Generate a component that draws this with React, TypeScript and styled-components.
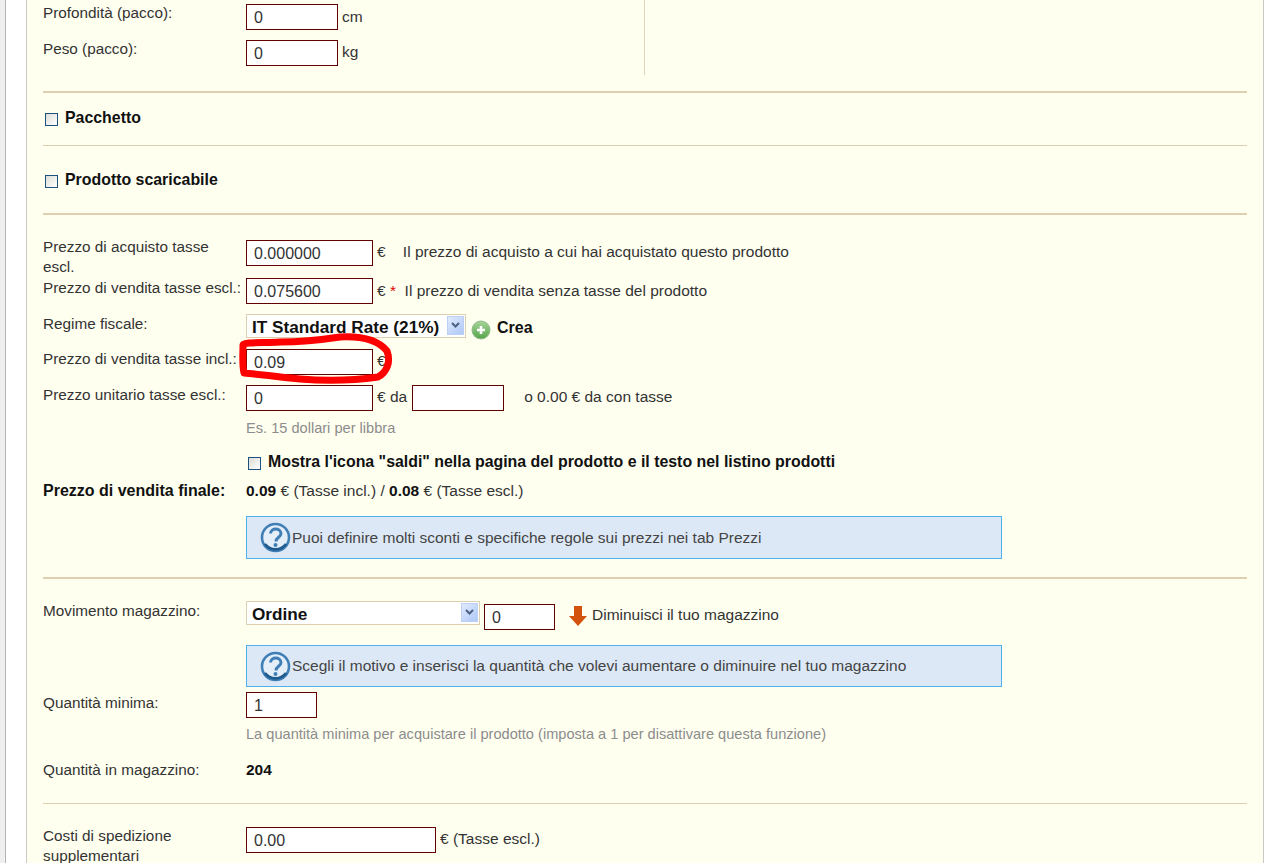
import React from "react";
import styled, { createGlobalStyle } from "styled-components";

const Global = createGlobalStyle`
  html, body { margin: 0; padding: 0; background: #fff; height: 100%; overflow: hidden; }
  body { font-family: "Liberation Sans", Arial, sans-serif; font-size: 15.3px; color: #222; }
`;

const Page = styled.div`
  position: relative;
  height: 863px;
  width: 1284px;
  overflow: hidden;
  display: flex;
  background: #fff;
`;
const Gutter = styled.div`
  width: 5px;
  background: #efefef;
  border-right: 1px solid #b4b4b4;
`;
const Margin = styled.div`
  width: 20px;
`;
const Panel = styled.main`
  width: 1238px;
  height: 863px;
  box-sizing: border-box;
  background: #fffff0;
  border-left: 1px solid #c8c8c8;
  border-right: 1px solid #c8c8c8;
  padding: 0 16px;
`;
const Dims = styled.section`
  width: 602px;
  height: 75px;
  padding-top: 4px;
  box-sizing: border-box;
  border-right: 1px solid #e0d6b8;
`;
const Row = styled.div<{ $mt?: number; $h?: number }>`
  display: flex;
  align-items: flex-start;
  margin-top: ${(p) => p.$mt ?? 0}px;
  height: ${(p) => p.$h ?? 26}px;
`;
const Label = styled.label<{ $dy?: number }>`
  width: 203px;
  flex: none;
  line-height: 20px;
  color: #333;
  white-space: nowrap;
  margin-top: ${(p) => p.$dy ?? 0}px;
`;
const Field = styled.input<{ $w: number }>`
  width: ${(p) => p.$w}px;
  height: 26px;
  box-sizing: border-box;
  border: 1px solid #600000;
  background: #fff;
  padding: 2px 0 0 7px;
  margin: 0;
  font: 16px "Liberation Sans", Arial, sans-serif;
  color: #333;
  flex: none;
  outline: none;
`;
const After = styled.span<{ $ml?: number; $pt?: number }>`
  margin-left: ${(p) => p.$ml ?? 4}px;
  padding-top: ${(p) => p.$pt ?? 3}px;
  line-height: 20px;
  font-size: 15.5px;
  color: #333;
  white-space: pre;
`;
const Star = styled.span`
  color: #d00;
`;
const Rule = styled.hr<{ $t?: number; $mt: number }>`
  border: 0;
  margin: ${(p) => p.$mt}px 0 0;
  height: ${(p) => p.$t ?? 2}px;
  background: #decfb0;
`;
const CheckRow = styled.div<{ $mt: number; $ml?: number }>`
  display: flex;
  align-items: center;
  gap: 7px;
  height: 20px;
  margin-top: ${(p) => p.$mt}px;
  margin-left: ${(p) => p.$ml ?? 2}px;
  font-size: 15.9px;
  font-weight: bold;
  color: #111;
`;
const Box = styled.span`
  width: 11px;
  height: 11px;
  flex: none;
  border: 1px solid #1c5180;
  background: linear-gradient(135deg, #dcdcd7, #fff);
  margin-top: 2px;
`;
const Select = styled.div<{ $w: number }>`
  width: ${(p) => p.$w}px;
  height: 24px;
  box-sizing: border-box;
  flex: none;
  display: flex;
  align-items: center;
  justify-content: space-between;
  background: #fff;
  border: 1px solid #decfb0;
  padding: 0 1px 0 5px;
  font-size: 17.2px;
  font-weight: bold;
  color: #111;
  white-space: nowrap;
`;
const SelectLabel = styled.span`
  padding-top: 2px;
`;
const SelectArrow = styled.span`
  width: 17px;
  height: 19px;
  background: linear-gradient(135deg, #e1eafe, #aec8f7);
  border: 1px solid #bcd0f5;
  box-sizing: border-box;
  display: flex;
  align-items: center;
  justify-content: center;
  margin-bottom: 2px;
`;
const CreateLink = styled.span`
  display: flex;
  align-items: flex-start;
  gap: 6px;
  margin-left: 5px;
  font-size: 16px;
  line-height: 20px;
  font-weight: bold;
  color: #111;
  padding-top: 4px;
`;
const PlusIcon = styled.svg`
  margin-top: 2px;
`;
const Hint = styled.p<{ $mt: number }>`
  margin: ${(p) => p.$mt}px 0 0 203px;
  height: 18px;
  line-height: 18px;
  font-size: 14.6px;
  color: #8c8c8c;
`;
const Strong = styled.b`
  color: #111;
`;
const FinalLabel = styled(Strong)`
  font-size: 16px;
`;
const Info = styled.div<{ $mt: number; $h: number }>`
  margin: ${(p) => p.$mt}px 0 0 203px;
  width: 756px;
  height: ${(p) => p.$h}px;
  box-sizing: border-box;
  background: #dde8f6;
  border: 1px solid #4fb0ee;
  display: flex;
  align-items: center;
  padding-left: 13px;
  gap: 1px;
  font-size: 15.5px;
  color: #444;
`;
const Scribble = styled.svg`
  position: absolute;
  left: 230px;
  top: 325px;
  pointer-events: none;
`;

const Help = () => (
  <svg width="31" height="31" viewBox="0 0 31 31" style={{ flex: "none" }}>
    <circle cx="15.5" cy="15.5" r="13.5" fill="#e4eef8" stroke="#3f7fb5" strokeWidth="2.6" />
    <path d="M5 22a13 13 0 0 0 21 0" fill="none" stroke="#1f5a8c" strokeWidth="2.6" />
    <path d="M10.500 11.500c.5-6 10-6 10.500 0 0 4-5 3.500-5 8" fill="none" stroke="#3f7fb5" strokeWidth="3" />
    <circle cx="15.500" cy="23" r="2" fill="#3f7fb5" />
  </svg>
);
const Chevron = () => (
  <svg width="9" height="6" viewBox="0 0 9 6">
    <path d="M1 1l3.500 3.500L8 1" fill="none" stroke="#4d6185" strokeWidth="2" />
  </svg>
);
const Plus = () => (
  <PlusIcon width="20" height="20" viewBox="0 0 20 20">
    <defs>
      <linearGradient id="pg" x1="0" y1="0" x2="0" y2="1">
        <stop offset="0" stopColor="#a6d49a" />
        <stop offset="1" stopColor="#55a648" />
      </linearGradient>
    </defs>
    <circle cx="10" cy="10" r="9" fill="url(#pg)" stroke="#8fb98a" />
    <path d="M10 6v8M6 10h8" stroke="#fff" strokeWidth="2.600" />
  </PlusIcon>
);
const Down = () => (
  <svg width="20" height="22" viewBox="0 0 20 22" style={{ flex: "none" }}>
    <path d="M6 1h8v10h5l-9 10L1 11h5z" fill="#d4530c" />
  </svg>
);

export default function App() {
  return (
    <Page>
      <Global />
      <Gutter />
      <Margin />
      <Panel>
        <Dims>
          <Row $h={36}>
            <Label $dy={-1}>Profondità (pacco):</Label>
            <Field $w={92} value="0" readOnly />
            <After>cm</After>
          </Row>
          <Row>
            <Label $dy={-1}>Peso (pacco):</Label>
            <Field $w={92} value="0" readOnly />
            <After $pt={2}>kg</After>
          </Row>
        </Dims>
        <Rule $mt={16} />
        <CheckRow $mt={15}><Box />Pacchetto</CheckRow>
        <Rule $t={1} $mt={17} />
        <CheckRow $mt={24}><Box />Prodotto scaricabile</CheckRow>
        <Rule $mt={23} />
        <Row $mt={25}>
          <Label $dy={-3}>Prezzo di acquisto tasse<br />escl.</Label>
          <Field $w={127} value="0.000000" readOnly />
          <After $pt={2}>€    Il prezzo di acquisto a cui hai acquistato questo prodotto</After>
        </Row>
        <Row $mt={12}>
          <Label>Prezzo di vendita tasse escl.:</Label>
          <Field $w={127} value="0.075600" readOnly />
          <After $pt={3}>€ <Star>*</Star>  Il prezzo di vendita senza tasse del prodotto</After>
        </Row>
        <Row $mt={10} $h={25}>
          <Label>Regime fiscale:</Label>
          <Select $w={220}><SelectLabel>IT Standard Rate (21%)</SelectLabel><SelectArrow><Chevron /></SelectArrow></Select>
          <CreateLink><Plus />Crea</CreateLink>
        </Row>
        <Row $mt={10}>
          <Label>Prezzo di vendita tasse incl.:</Label>
          <Field $w={127} value="0.09" readOnly />
          <After $pt={2}>€</After>
        </Row>
        <Row $mt={10}>
          <Label>Prezzo unitario tasse escl.:</Label>
          <Field $w={127} value="0" readOnly />
          <After $pt={2}>€ da</After>
          <Field $w={92} value="" readOnly style={{ marginLeft: 5 }} />
          <After $ml={20} $pt={2}>o 0.00 € da con tasse</After>
        </Row>
        <Hint $mt={8}>Es. 15 dollari per libbra</Hint>
        <CheckRow $mt={15} $ml={205}><Box />Mostra l'icona "saldi" nella pagina del prodotto e il testo nel listino prodotti</CheckRow>
        <Row $mt={9} $h={20}>
          <Label><FinalLabel>Prezzo di vendita finale:</FinalLabel></Label>
          <After $ml={0} $pt={0}><Strong>0.09</Strong> € (Tasse incl.) / <Strong>0.08</Strong> € (Tasse escl.)</After>
        </Row>
        <Info $mt={15} $h={43}><Help />Puoi definire molti sconti e specifiche regole sui prezzi nei tab Prezzi</Info>
        <Rule $mt={18} />
        <Row $mt={22} $h={29}>
          <Label>Movimento magazzino:</Label>
          <Select $w={234}><SelectLabel>Ordine</SelectLabel><SelectArrow><Chevron /></SelectArrow></Select>
          <Field $w={71} value="0" readOnly style={{ marginLeft: 4, marginTop: 3 }} />
          <After $ml={13} $pt={4} style={{ display: "flex", gap: 4 }}><Down />Diminuisci il tuo magazzino</After>
        </Row>
        <Info $mt={15} $h={42}><Help />Scegli il motivo e inserisci la quantità che volevi aumentare o diminuire nel tuo magazzino</Info>
        <Row $mt={5}>
          <Label $dy={1}>Quantità minima:</Label>
          <Field $w={71} value="1" readOnly />
        </Row>
        <Hint $mt={7}>La quantità minima per acquistare il prodotto (imposta a 1 per disattivare questa funzione)</Hint>
        <Row $mt={17} $h={20}>
          <Label>Quantità in magazzino:</Label>
          <After $ml={0} $pt={0}><Strong>204</Strong></After>
        </Row>
        <Rule $t={1} $mt={23} />
        <Row $mt={23}>
          <Label $dy={-1}>Costi di spedizione<br />supplementari</Label>
          <Field $w={190} value="0.00" readOnly />
          <After $pt={2}>€ (Tasse escl.)</After>
        </Row>
      </Panel>
      <Scribble width="170" height="65" viewBox="230 325 170 65">
        <path
          d="M243 345C243 342 262 343 280 342C300 342 320 340 340 337C360 336 378 340 387 351C391 362 387 372 378 377C350 381 325 381 300 379C280 377 258 374 244 373C242 364 243 354 243 345Z"
          fill="none"
          stroke="#fe0000"
          strokeWidth="7"
          strokeLinejoin="round"
        />
      </Scribble>
    </Page>
  );
}
